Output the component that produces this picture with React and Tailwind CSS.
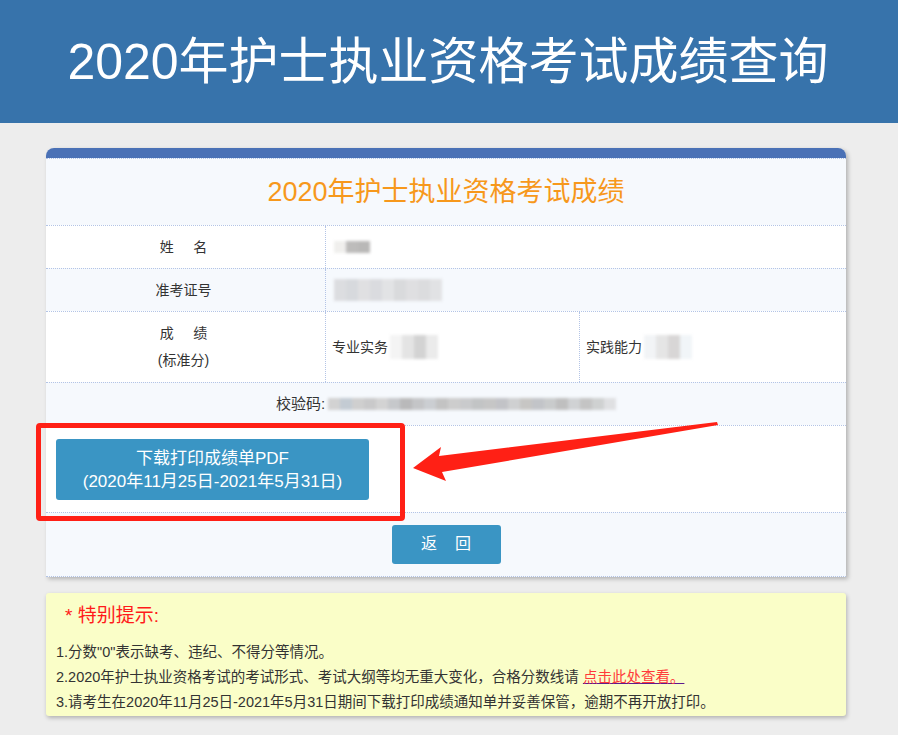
import React from "react";

const font = { fontFamily: '"Liberation Sans", "Noto Sans CJK SC", sans-serif' };

// mosaic blocks standing in for the blurred personal data
const Mosaic = ({ cells, className = "" }) => (
  <div className={"flex blur-[1.5px] " + className}>
    {cells.map((c, i) => (
      <div key={i} className="h-full w-[12px]" style={{ background: c }} />
    ))}
  </div>
);

const App = () => {
  return (
    <div
      className="relative min-h-[735px] w-[898px] overflow-hidden bg-[#ededed]"
      style={font}>
      {/* HEADER */}
      <div className="flex h-[123px] items-center justify-center bg-[#3773ab]">
        <h1 className="ml-[-2px] text-[50px] leading-none text-white">
          2020年护士执业资格考试成绩查询
        </h1>
      </div>

      {/* RESULT CARD */}
      <div className="relative ml-[46px] mt-[25px] w-[800px] rounded-t-[8px] shadow-[2px_2px_4px_rgba(0,0,0,0.25)]">
        <div className="h-[10px] rounded-t-[8px] bg-[#4a71b6]" />

        {/* title */}
        <div className="flex h-[67px] items-center justify-center border-t border-dotted border-[#b3c4e6] bg-[#f6f9fd]">
          <span className="text-[27px] text-[#f7981c]">
            2020年护士执业资格考试成绩
          </span>
        </div>

        {/* name */}
        <div className="grid h-[43px] grid-cols-[280px_1fr] border-t border-dotted border-[#b3c4e6] bg-white text-[14px] text-[#333]">
          <div className="flex items-center justify-center border-r border-dotted border-[#b3c4e6] pr-[4px]">
            姓&nbsp;&nbsp;&nbsp;&nbsp;&nbsp;名
          </div>
          <div className="flex items-center pl-[8px]">
            <Mosaic className="h-[12px]" cells={["#f0efed", "#bdbcbb", "#b9b8b7"]} />
          </div>
        </div>

        {/* ticket no */}
        <div className="grid h-[43px] grid-cols-[280px_1fr] border-t border-dotted border-[#b3c4e6] bg-[#f6f9fd] text-[14px] text-[#333]">
          <div className="flex items-center justify-center border-r border-dotted border-[#b3c4e6] pr-[4px]">
            准考证号
          </div>
          <div className="flex items-center pl-[8px]">
            <Mosaic
              className="h-[22px]"
              cells={["#dcdde0", "#d7d9dd", "#e0e0e2", "#dadbdf", "#e2e3e5", "#d9dadc", "#dfdfe1", "#dbdcde", "#e1e2e4"]}
            />
          </div>
        </div>

        {/* score */}
        <div className="grid h-[71px] grid-cols-[280px_254px_1fr] border-t border-dotted border-[#b3c4e6] bg-white text-[14px] text-[#333]">
          <div className="flex flex-col items-center justify-center gap-[8px] border-r border-dotted border-[#b3c4e6] pr-[4px] leading-[19px]">
            <span>成&nbsp;&nbsp;&nbsp;&nbsp;&nbsp;绩</span>
            <span>(标准分)</span>
          </div>
          <div className="flex items-center border-r border-dotted border-[#b3c4e6] pl-[6px]">
            专业实务
            <Mosaic className="ml-[2px] h-[24px]" cells={["#f4f4f4", "#e4e4e4", "#d3d3d3", "#ebebeb"]} />
          </div>
          <div className="flex items-center pl-[6px]">
            实践能力
            <Mosaic className="ml-[2px] h-[24px]" cells={["#f2f4f6", "#e5e5e5", "#d8d6d6", "#f1f5f8"]} />
          </div>
        </div>

        {/* check code */}
        <div className="flex h-[43px] items-center justify-center border-t border-dotted border-[#b3c4e6] bg-[#f6f9fd] text-[15px] text-[#333]">
          校验码:
          <Mosaic
            className="ml-[3px] h-[12px]"
            cells={[
              "#d2d2d2", "#c3cbd3", "#cfcfcf", "#c9c9ca", "#d3d3d3", "#c6c8cb", "#b9b9ba",
              "#c4c5c7", "#cbced2", "#c3c3c3", "#cdcdcd", "#c9cacc", "#c2c4c5", "#c6c6c6",
              "#c2c3c7", "#cfd0d1", "#c7c6c4", "#c2c4c8", "#c9cbcc", "#bfbfbf", "#d0d2d4",
              "#c4c4c4", "#cfd1d1", "#dfe0e2",
            ]}
          />
        </div>

        {/* pdf download */}
        <div className="flex h-[87px] items-center border-t border-dotted border-[#b3c4e6] bg-white pl-[10px]">
          <button className="flex h-[61px] w-[313px] flex-col items-center justify-center rounded-[3px] bg-[#3a95c4] pt-[1px] text-[17px] leading-[23px] text-white">
            <span>下载打印成绩单PDF</span>
            <span>(2020年11月25日-2021年5月31日)</span>
          </button>
        </div>

        {/* back */}
        <div className="flex h-[65px] items-center justify-center border-y border-dotted border-[#b3c4e6] bg-[#f6f9fd]">
          <button className="mb-[1px] h-[39px] w-[109px] rounded-[3px] bg-[#3a95c4] indent-[18px] text-[16px] tracking-[18px] text-white">
            返回
          </button>
        </div>

        {/* red highlight box */}
        <div className="pointer-events-none absolute left-[-10px] top-[275px] h-[98px] w-[369px] rounded-[4px] border-[5px] border-[#ff2016]" />
      </div>

      {/* NOTICE */}
      <div className="ml-[46px] mt-[16px] w-[800px] rounded-[3px] bg-[#fafec8] px-[10px] pb-[1px] pt-[9px] shadow-[1px_2px_4px_rgba(0,0,0,0.25)]">
        <div className="pl-[9px] text-[19px] leading-[28px] text-[#ff1a1a]">* 特别提示:</div>
        <div className="mt-[10px] text-[14.5px] leading-[25px] text-[#333]">
          <p className="h-[25px]">1.分数"0"表示缺考、违纪、不得分等情况。</p>
          <p className="h-[25px]">
            2.2020年护士执业资格考试的考试形式、考试大纲等均无重大变化，合格分数线请{" "}
            <a className="text-[#ff3a3a] underline decoration-[#5b1b8f]">点击此处查看。</a>
          </p>
          <p className="h-[25px]">3.请考生在2020年11月25日-2021年5月31日期间下载打印成绩通知单并妥善保管，逾期不再开放打印。</p>
        </div>
      </div>

      {/* arrow annotation */}
      <svg className="pointer-events-none absolute left-0 top-0" width="898" height="735">
        <polygon
          points="413,468 441,447 439,456 717,422 718,425 442,472 446,481"
          fill="#ff2015"
        />
      </svg>
    </div>
  );
};

export default App;
